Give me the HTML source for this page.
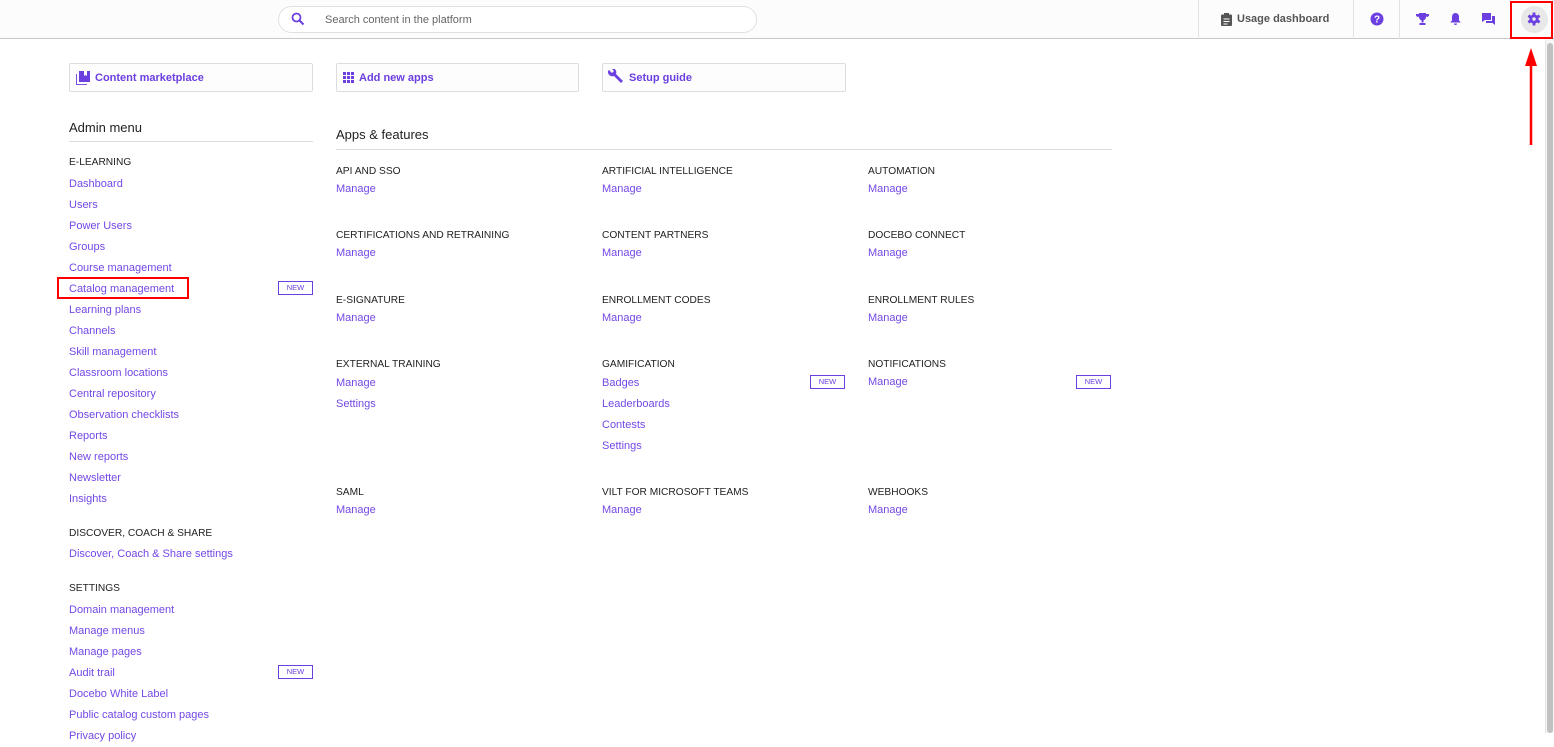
<!DOCTYPE html>
<html><head><meta charset="utf-8"><style>
*{margin:0;padding:0;box-sizing:border-box}
body{width:1554px;height:733px;overflow:hidden;background:#fff;font-family:"Liberation Sans",sans-serif;position:relative;color:#222}
.a{position:absolute;white-space:nowrap}
.top{position:absolute;left:0;top:0;width:1554px;height:39px;background:#fcfcfc;border-bottom:1px solid #c8c8c8}
.vd{position:absolute;top:0;width:1px;height:39px;background:#e2e2e2}
.lk{color:#7348e6;font-size:11px}
.h{font-size:10.2px;color:#222}
.btn{position:absolute;top:63px;height:29px;border:1px solid #ddd;background:#fdfdfd;border-radius:2px;font-size:11px;font-weight:bold;color:#6b3fe0}
.new{position:absolute;width:35px;height:14px;border:1px solid #6b3fe0;color:#6b3fe0;font-size:7.5px;text-align:center;line-height:12px}
</style></head><body>
<div class="top">
 <div class="a" style="left:278px;top:6px;width:479px;height:27px;border:1px solid #e0e0e0;border-radius:14px;background:#fff"></div>
 <svg class="a" style="left:291px;top:12px" width="14" height="14" viewBox="0 0 14 14"><circle cx="5.5" cy="5.5" r="4" fill="none" stroke="#6b3fe0" stroke-width="1.8"/><path d="M8.5 8.5L12.5 12.5" stroke="#6b3fe0" stroke-width="2"/></svg>
 <div class="a" style="left:325px;top:14px;font-size:11px;color:#666">Search content in the platform</div>
 <div class="vd" style="left:1198px"></div><div class="vd" style="left:1353px"></div><div class="vd" style="left:1399px"></div>
 <svg class="a" style="left:1221px;top:13px" width="11" height="13" viewBox="0 0 11 13"><rect x="0" y="1.5" width="11" height="11.5" rx="1" fill="#555"/><rect x="3" y="0" width="5" height="3" fill="#555"/><path d="M2.5 6h6M2.5 8.5h6M2.5 11h4" stroke="#fff" stroke-width="1"/></svg>
 <div class="a" style="left:1237px;top:13px;font-size:11px;font-weight:bold;color:#555">Usage dashboard</div>
 <svg class="a" style="left:1370px;top:12px" width="14" height="14" viewBox="0 0 14 14"><circle cx="7" cy="7" r="6.5" fill="#6b3fe0"/><text x="7" y="10.5" font-size="10" font-weight="bold" fill="#fff" text-anchor="middle" font-family="Liberation Sans">?</text></svg>
 <svg class="a" style="left:1416px;top:13px" width="13" height="12" viewBox="0 0 13 12"><path d="M3 0h7v4a3.5 3.5 0 0 1-7 0z M0 1h3v2.5a2 2 0 0 1-3-1z M10 1h3v1.5a2 2 0 0 1-3 1z M5.5 7h2v2.5h-2z M3.5 10h6v2h-6z" fill="#6b3fe0"/></svg>
 <svg class="a" style="left:1450px;top:12px" width="11" height="13" viewBox="0 0 11 13"><path d="M5.5 1a3.5 3.5 0 0 1 3.5 3.5v4l1.5 1.5v.5h-10v-.5l1.5-1.5v-4A3.5 3.5 0 0 1 5.5 1z M4 11.5h3a1.5 1.5 0 0 1-3 0z" fill="#6b3fe0"/></svg>
 <svg class="a" style="left:1482px;top:13px" width="13" height="12" viewBox="0 0 13 12"><path d="M0 0h9v7h-6l-3 2z M10 3h3v9l-2.5-2h-6.5v-2h6z" fill="#6b3fe0"/></svg>
 <div class="a" style="left:1521px;top:6px;width:27px;height:27px;border-radius:50%;background:#e8e8e8"></div>
 <svg class="a" style="left:1527px;top:12px" width="14" height="14" viewBox="0 0 14 14"><g fill="#6b3fe0"><circle cx="7" cy="7" r="4.6"/><rect x="5.6" y="0.5" width="2.8" height="13"/><rect x="5.6" y="0.5" width="2.8" height="13" transform="rotate(60 7 7)"/><rect x="5.6" y="0.5" width="2.8" height="13" transform="rotate(120 7 7)"/></g><circle cx="7" cy="7" r="1.8" fill="#e8e8e8"/></svg>
</div>
<div class="a" style="left:1510px;top:1px;width:43px;height:38px;border:2px solid #f00"></div>
<svg class="a" style="left:1524px;top:48px" width="14" height="98" viewBox="0 0 14 98"><path d="M7 14V97" stroke="#f00" stroke-width="2.5"/><path d="M7 0L13 18H1z" fill="#f00"/></svg>
<div class="a" style="left:1545px;top:40px;width:9px;height:693px;background:#f6f6f6;border-left:1px solid #e6e6e6"></div>
<div class="a" style="left:1547px;top:43px;width:6px;height:690px;background:#c1c1c1;border-radius:3px"></div>

<div class="btn" style="left:69px;width:244px"><svg class="a" style="left:6px;top:7px" width="14" height="14" viewBox="0 0 14 14"><path d="M3 0h11v11h-11z" fill="#6b3fe0"/><path d="M0 3v11h11" fill="none" stroke="#6b3fe0" stroke-width="1.8"/><path d="M8 0v5l1.5-1 1.5 1v-5" fill="#fff"/></svg><span class="a" style="left:25px;top:8px">Content marketplace</span></div>
<div class="btn" style="left:336px;width:243px"><svg class="a" style="left:6px;top:8px" width="11" height="11" viewBox="0 0 11 11" fill="#6b3fe0"><rect x="0" y="0" width="3" height="3"/><rect x="4" y="0" width="3" height="3"/><rect x="8" y="0" width="3" height="3"/><rect x="0" y="4" width="3" height="3"/><rect x="4" y="4" width="3" height="3"/><rect x="8" y="4" width="3" height="3"/><rect x="0" y="8" width="3" height="3"/><rect x="4" y="8" width="3" height="3"/><rect x="8" y="8" width="3" height="3"/></svg><span class="a" style="left:22px;top:8px">Add new apps</span></div>
<div class="btn" style="left:602px;width:244px"><svg class="a" style="left:4px;top:5px" width="16" height="16" viewBox="0 0 16 16"><path d="M2 1l3 3 2-2-3-3a4.5 4.5 0 0 1 5 6l7 7-2 2-7-7a4.5 4.5 0 0 1-6-5z" fill="#6b3fe0"/></svg><span class="a" style="left:26px;top:8px">Setup guide</span></div>

<div class="a" style="left:69px;top:120px;font-size:13px;color:#222">Admin menu</div>
<div class="a" style="left:69px;top:141px;width:244px;height:1px;background:#ddd"></div>
<div class="a" style="left:336px;top:127px;font-size:13px;color:#222">Apps &amp; features</div>
<div class="a" style="left:336px;top:149px;width:776px;height:1px;background:#ddd"></div>

<div class="a h" style="left:69px;top:157px">E-LEARNING</div>
<div class="a lk" style="left:69px;top:174px;line-height:21px">Dashboard<br>Users<br>Power Users<br>Groups<br>Course management<br>Catalog management<br>Learning plans<br>Channels<br>Skill management<br>Classroom locations<br>Central repository<br>Observation checklists<br>Reports<br>New reports<br>Newsletter<br>Insights</div>
<div class="a" style="left:57px;top:277px;width:132px;height:22px;border:2px solid #f00"></div>
<div class="new" style="left:278px;top:281px">NEW</div>
<div class="a h" style="left:69px;top:528px">DISCOVER, COACH &amp; SHARE</div>
<div class="a lk" style="left:69px;top:548px">Discover, Coach &amp; Share settings</div>
<div class="a h" style="left:69px;top:583px">SETTINGS</div>
<div class="a lk" style="left:69px;top:600px;line-height:21px">Domain management<br>Manage menus<br>Manage pages<br>Audit trail<br>Docebo White Label<br>Public catalog custom pages<br>Privacy policy</div>
<div class="new" style="left:278px;top:665px">NEW</div>

<div class="a h" style="left:336px;top:166px">API AND SSO</div><div class="a lk" style="left:336px;top:183px">Manage</div>
<div class="a h" style="left:602px;top:166px">ARTIFICIAL INTELLIGENCE</div><div class="a lk" style="left:602px;top:183px">Manage</div>
<div class="a h" style="left:868px;top:166px">AUTOMATION</div><div class="a lk" style="left:868px;top:183px">Manage</div>
<div class="a h" style="left:336px;top:230px">CERTIFICATIONS AND RETRAINING</div><div class="a lk" style="left:336px;top:247px">Manage</div>
<div class="a h" style="left:602px;top:230px">CONTENT PARTNERS</div><div class="a lk" style="left:602px;top:247px">Manage</div>
<div class="a h" style="left:868px;top:230px">DOCEBO CONNECT</div><div class="a lk" style="left:868px;top:247px">Manage</div>
<div class="a h" style="left:336px;top:295px">E-SIGNATURE</div><div class="a lk" style="left:336px;top:312px">Manage</div>
<div class="a h" style="left:602px;top:295px">ENROLLMENT CODES</div><div class="a lk" style="left:602px;top:312px">Manage</div>
<div class="a h" style="left:868px;top:295px">ENROLLMENT RULES</div><div class="a lk" style="left:868px;top:312px">Manage</div>
<div class="a h" style="left:336px;top:359px">EXTERNAL TRAINING</div><div class="a lk" style="left:336px;top:373px;line-height:21px">Manage<br>Settings</div>
<div class="a h" style="left:602px;top:359px">GAMIFICATION</div><div class="a lk" style="left:602px;top:373px;line-height:21px">Badges<br>Leaderboards<br>Contests<br>Settings</div>
<div class="new" style="left:810px;top:375px">NEW</div>
<div class="a h" style="left:868px;top:359px">NOTIFICATIONS</div><div class="a lk" style="left:868px;top:376px">Manage</div>
<div class="new" style="left:1076px;top:375px">NEW</div>
<div class="a h" style="left:336px;top:487px">SAML</div><div class="a lk" style="left:336px;top:504px">Manage</div>
<div class="a h" style="left:602px;top:487px">VILT FOR MICROSOFT TEAMS</div><div class="a lk" style="left:602px;top:504px">Manage</div>
<div class="a h" style="left:868px;top:487px">WEBHOOKS</div><div class="a lk" style="left:868px;top:504px">Manage</div>
</body></html>
